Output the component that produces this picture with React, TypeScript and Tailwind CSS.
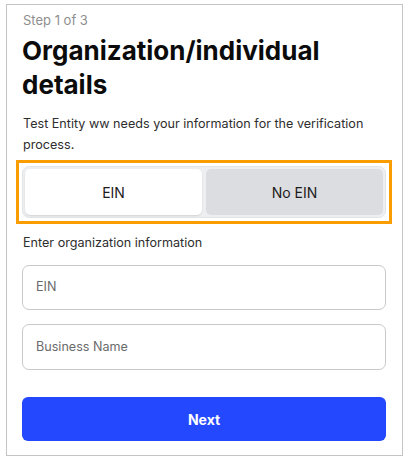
import React from "react";

export default function App() {
  return (
    <div
      className="w-[406px] h-[458px] bg-white pt-[4px] pl-[6px]"
      style={{ fontFamily: "Inter, 'Noto Sans', sans-serif" }}
    >
      <div className="w-[397px] h-[452px] border border-[#c4c4c4] pl-[15px] pr-[16px] pt-[5px] flex flex-col">
        <div className="text-[13px] leading-[20px] text-[#8e8e8e] pl-[1px]">Step 1 of 3</div>
        <h1 className="mt-[4px] max-w-[330px] text-[26px] leading-[34px] font-bold text-[#0b0b0b]">
          Organization/individual details
        </h1>
        <p className="mt-[11px] text-[12.6px] leading-[21px] text-[#2e2e2e] pl-[1px] pr-[4px]">
          Test Entity ww needs your information for the verification process.
        </p>
        <div className="mt-[5px] -mx-[6px] border-[3px] border-[#fa9d00] p-[3px]">
          <div className="h-[52px] rounded-[7px] border border-[#e4e5e7] bg-[#eeeff1] p-[2px] flex gap-[4px]">
            <button className="flex-1 rounded-[5px] bg-white shadow-[0_1px_2px_rgba(0,0,0,0.12)] text-[14px] text-[#1c1c1c] flex items-center justify-center">
              EIN
            </button>
            <button className="flex-1 rounded-[5px] bg-[#dcdde0] text-[14px] text-[#1c1c1c] flex items-center justify-center">
              No EIN
            </button>
          </div>
        </div>
        <div className="mt-[9px] text-[12.6px] leading-[20px] text-[#2e2e2e] pl-[1px]">
          Enter organization information
        </div>
        <div className="mt-[12px] h-[45px] rounded-[7px] border border-[#c9c9c9] flex items-center px-[13px] text-[12.6px] text-[#6b6b6b]">
          EIN
        </div>
        <div className="mt-[14px] h-[46px] rounded-[7px] border border-[#c9c9c9] flex items-center px-[13px] text-[12.6px] text-[#6b6b6b]">
          Business Name
        </div>
        <button className="mt-[27px] h-[44px] rounded-[6px] bg-[#2448fe] text-white text-[14px] font-bold flex items-center justify-center">
          Next
        </button>
      </div>
    </div>
  );
}
